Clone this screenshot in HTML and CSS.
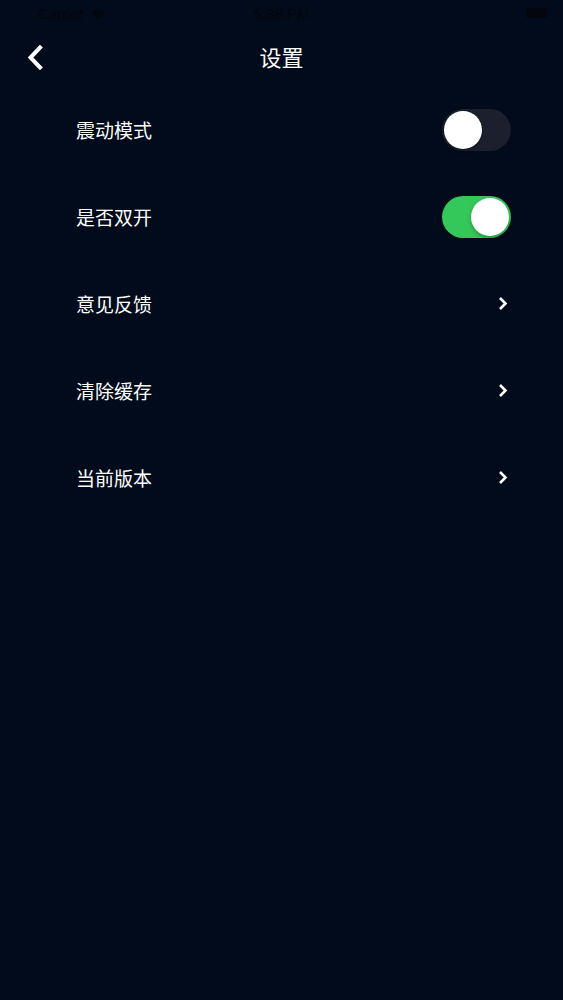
FILE: index.html
```html
<!DOCTYPE html>
<html lang="zh">
<head>
<meta charset="utf-8">
<title>设置</title>
<link rel="stylesheet" href="styles.css">
</head>
<body>
<div class="screen">
  <div class="statusbar">
    <div class="sb-left">Carrier
      <svg class="wifi" width="15" height="11" viewBox="0 0 15 11"><path d="M7.5 11 L1 4.2 A9.5 9.5 0 0 1 14 4.2 Z" fill="#03060c"/></svg>
    </div>
    <div class="sb-time">5:38 PM</div>
    <div class="sb-right"><span class="battery"></span></div>
  </div>
  <div class="navbar">
    <svg class="back" width="16" height="25" viewBox="0 0 16 25"><path d="M13 2.5 L3.5 12.5 L13 22.5" fill="none" stroke="#fff" stroke-width="4" stroke-linecap="square"/></svg>
    <div class="title">设置</div>
  </div>
  <div class="list">
    <div class="row"><span class="label">震动模式</span><span class="switch"><span class="knob"></span></span></div>
    <div class="row"><span class="label">是否双开</span><span class="switch on"><span class="knob"></span></span></div>
    <div class="row"><span class="label">意见反馈</span><svg class="chev" width="10" height="15" viewBox="0 0 10 15"><path d="M2 2 L7.5 7.5 L2 13" fill="none" stroke="#fff" stroke-width="2.6"/></svg></div>
    <div class="row"><span class="label">清除缓存</span><svg class="chev" width="10" height="15" viewBox="0 0 10 15"><path d="M2 2 L7.5 7.5 L2 13" fill="none" stroke="#fff" stroke-width="2.6"/></svg></div>
    <div class="row"><span class="label">当前版本</span><svg class="chev" width="10" height="15" viewBox="0 0 10 15"><path d="M2 2 L7.5 7.5 L2 13" fill="none" stroke="#fff" stroke-width="2.6"/></svg></div>
  </div>
</div>
</body>
</html>
```

FILE: styles.css
```css
html, body {
  margin: 0;
  padding: 0;
  background: #020b1b;
}
.screen {
  width: 563px;
  height: 1000px;
  background: #020b1b;
  font-family: "Noto Sans CJK SC", "Noto Sans", sans-serif;
  color: #fff;
}
.statusbar {
  height: 26px;
  display: flex;
  align-items: center;
  justify-content: space-between;
  padding: 0 14px 0 38px;
  font-family: "Liberation Sans", sans-serif;
  font-size: 15px;
  color: #03060c;
  position: relative;
}
.sb-left {
  display: flex;
  align-items: center;
  gap: 7px;
  width: 120px;
}
.sb-time {
  position: absolute;
  left: 0;
  right: 0;
  text-align: center;
  pointer-events: none;
}
.sb-right {
  display: flex;
  align-items: center;
}
.battery {
  display: block;
  width: 21px;
  height: 10px;
  background: #03060c;
  border-radius: 3px;
  margin-right: 2px;
}
.navbar {
  height: 60px;
  display: flex;
  align-items: center;
  justify-content: center;
  position: relative;
}
.back {
  position: absolute;
  left: 27px;
  top: 19px;
}
.title {
  font-size: 22px;
  line-height: 1;
  margin-top: -1px;
}
.list {
  display: flex;
  flex-direction: column;
}
.row {
  height: 87px;
  display: flex;
  align-items: center;
  justify-content: space-between;
  padding: 0 52px 0 76px;
}
.label {
  font-size: 19px;
  line-height: 1;
}
.switch {
  width: 69px;
  height: 42px;
  border-radius: 21px;
  background: #1c1f2d;
  position: relative;
  display: block;
}
.switch.on {
  background: #34c759;
}
.knob {
  position: absolute;
  top: 2px;
  left: 2px;
  width: 38px;
  height: 38px;
  border-radius: 50%;
  background: #fff;
  box-shadow: 0 2px 4px rgba(0,0,0,0.25);
}
.switch.on .knob {
  left: 29px;
}
.chev {
  margin-right: 3px;
}
```
